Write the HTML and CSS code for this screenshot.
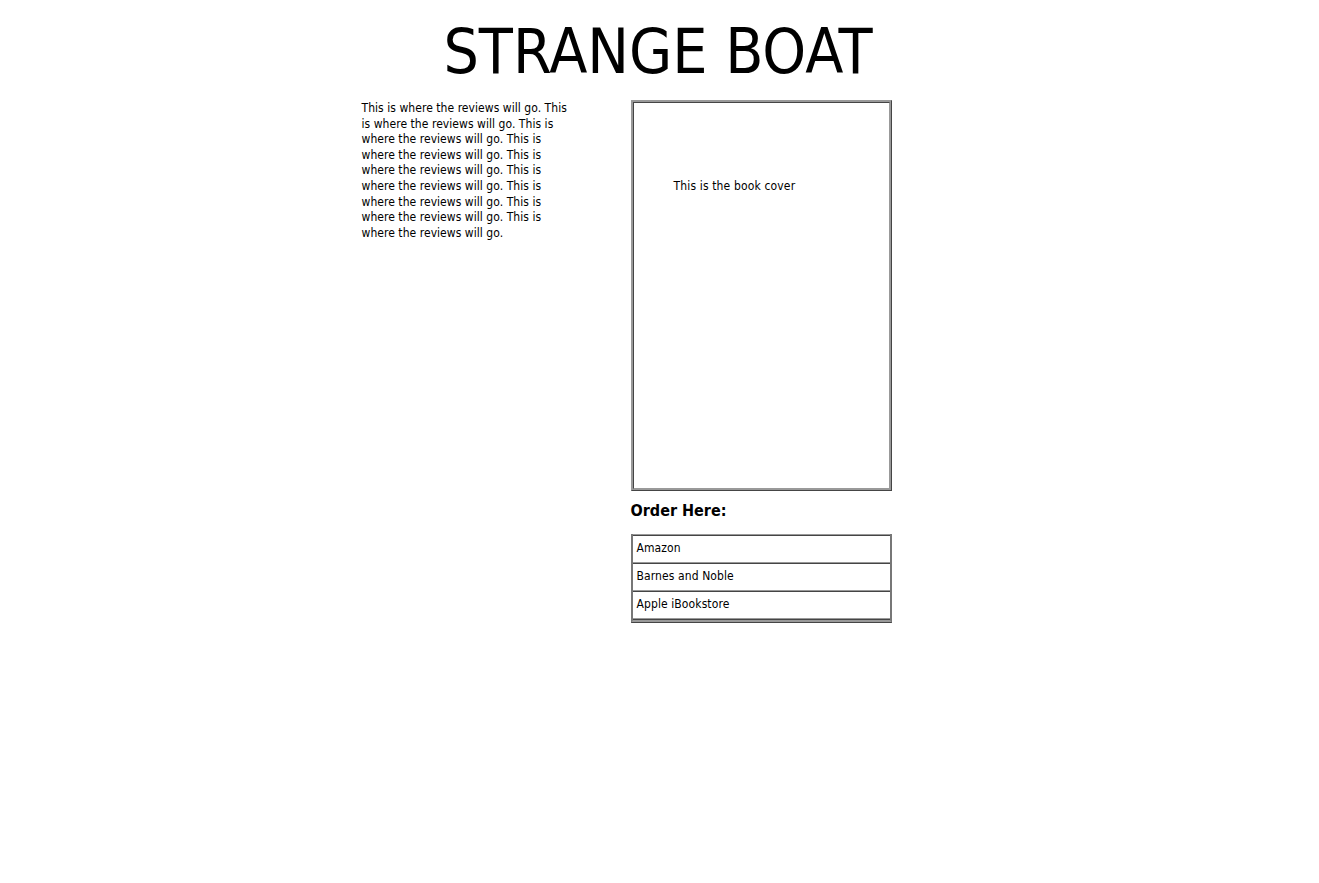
FILE: index.html
```html
<!DOCTYPE html>
<html>
<head>
<meta charset="utf-8">
<title>Strange Boat</title>
<link rel="stylesheet" href="styles.css">
</head>
<body>
<div class="page">
  <h1 class="title">STRANGE BOAT</h1>
  <div class="main">
    <div class="reviews">This is where the reviews will go. This is where the reviews will go. This is where the reviews will go. This is where the reviews will go. This is where the reviews will go. This is where the reviews will go. This is where the reviews will go. This is where the reviews will go. This is where the reviews will go.</div>
    <div class="side">
      <div class="cover"><p class="cover-text">This is the book cover</p></div>
      <h3 class="order-title">Order Here:</h3>
      <div class="order-list">
        <div class="order-item">Amazon</div>
        <div class="order-item">Barnes and Noble</div>
        <div class="order-item">Apple iBookstore</div>
      </div>
    </div>
  </div>
</div>
</body>
</html>
```
FILE: styles.css
```css
html, body {
  margin: 0;
  padding: 0;
  background: #fff;
  color: #000;
  font-family: "DejaVu Sans Condensed", "DejaVu Sans", sans-serif;
  font-stretch: condensed;
}
.page {
  width: 600px;
  margin: 0 auto;
  padding-top: 16px;
}
.title {
  margin: 0;
  padding-right: 3px;
  font-weight: normal;
  font-size: 62px;
  line-height: 72px;
  text-align: center;
  height: 84px;
}
.main {
  display: flex;
  gap: 56px;
  padding-left: 2px;
}
.reviews {
  width: 213px;
  flex: none;
  font-size: 12px;
  line-height: 15.6px;
  padding-top: 1px;
  letter-spacing: 0.05px;
}
.side {
  width: 261px;
  flex: none;
}
.cover {
  box-sizing: border-box;
  height: 391px;
  border: 3px ridge #999;
  padding: 76px 0 0 40px;
}
.cover-text {
  margin: 0;
  font-size: 12px;
  line-height: 14px;
  letter-spacing: 0.15px;
}
.order-title {
  margin: 10px 0 0 0;
  font-size: 16px;
  line-height: 20px;
  font-weight: bold;
}
.order-list {
  margin-top: 13px;
  border-left: 2px solid #777;
  border-right: 2px solid #777;
  border-bottom: 3px ridge #999;
}
.order-item {
  font-size: 12px;
  line-height: 14px;
  padding: 5px 4px 7px 4px;
  border-top: 2px ridge #999;
  height: 14px;
  box-sizing: content-box;
  letter-spacing: 0.1px;
}
.order-item:last-child {
  border-bottom: 2px ridge #999;
}
```
